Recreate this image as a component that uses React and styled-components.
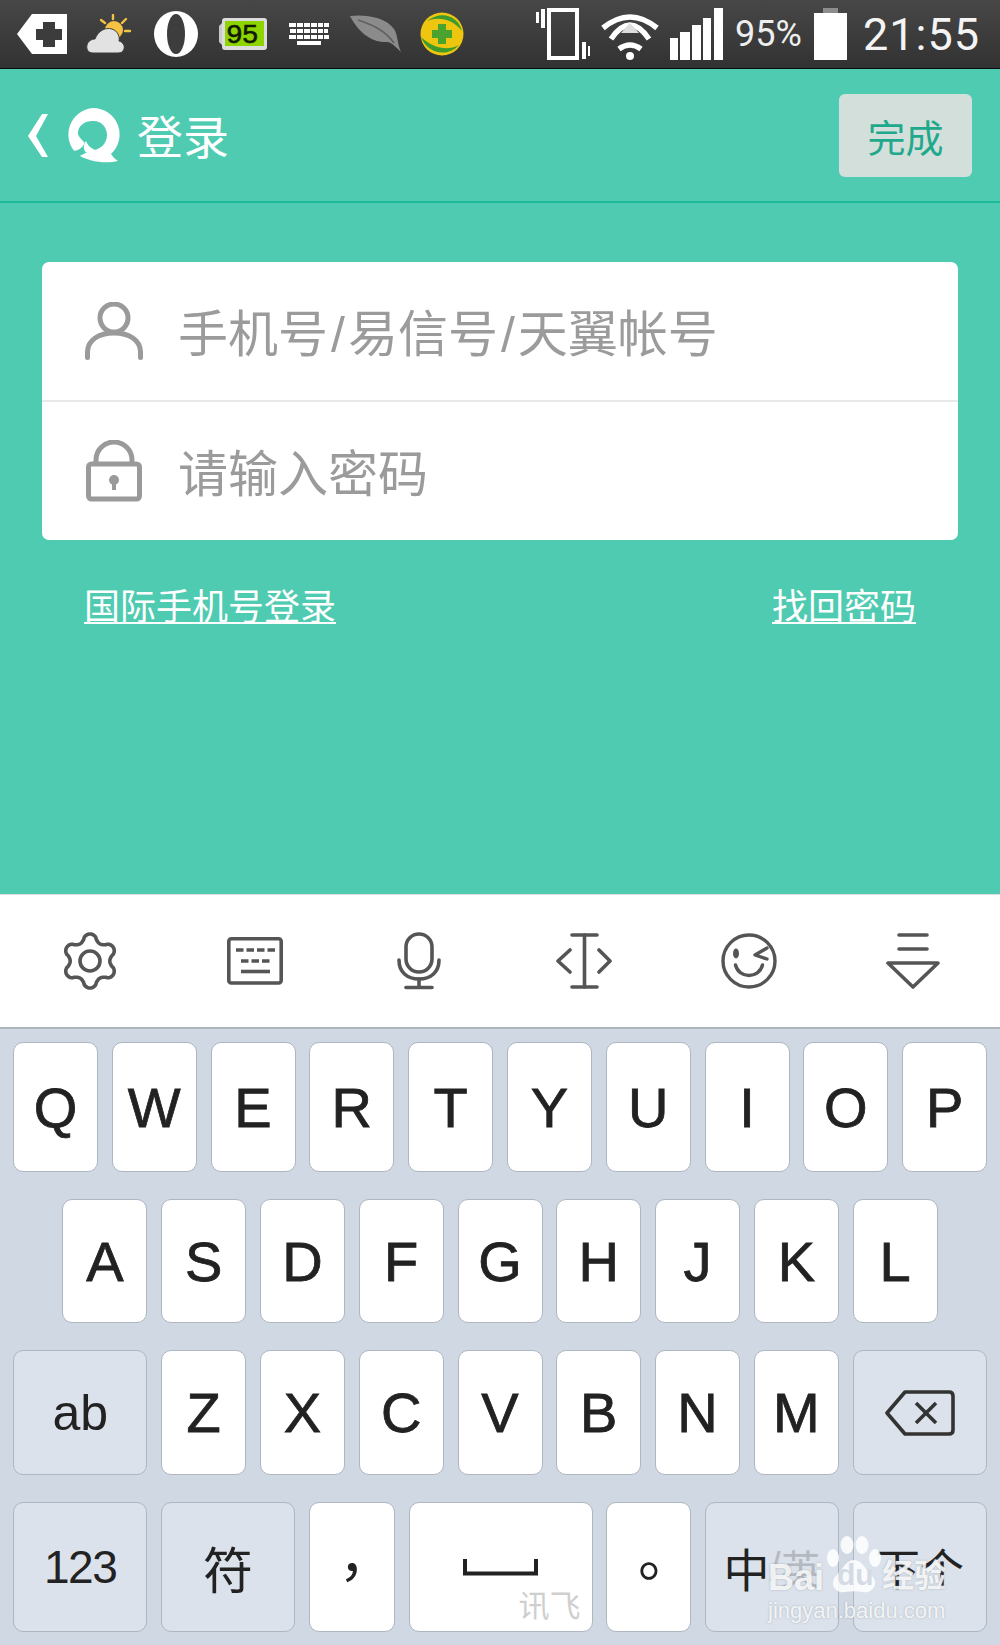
import React from 'react';
import styled, { createGlobalStyle } from 'styled-components';

const CJK = `"Liberation Sans", "Noto Sans CJK SC", sans-serif`;

const GlobalStyle = createGlobalStyle`
  html, body {
    margin: 0;
    padding: 0;
    background: #cfd8e3;
  }
`;

const Page = styled.div`
  position: relative;
  width: 1000px;
  height: 1645px;
  overflow: hidden;
  display: flex;
  flex-direction: column;
  font-family: ${CJK};
`;

const StatusBar = styled.div`
  height: 68px;
  flex: none;
  display: flex;
  align-items: center;
  padding-left: 9px;
  padding-right: 20px;
  background: linear-gradient(#474747, #323232);
  border-bottom: 1px solid #0c0c0c;
`;

const NoticeSlot = styled.div`
  width: 66.7px;
  display: flex;
  justify-content: center;
  align-items: center;
`;

const StatusRight = styled.div`
  margin-left: auto;
  display: flex;
  align-items: center;
  gap: 10px;
`;

const Percent = styled.span`
  font-family: Roboto, sans-serif;
  font-size: 36px;
  color: #eee;
  margin: 0 2px;
`;

const Clock = styled.span`
  font-family: Roboto, sans-serif;
  font-size: 45px;
  letter-spacing: 1px;
  color: #f4f4f4;
  margin-left: 6px;
`;

const Header = styled.header`
  height: 132px;
  flex: none;
  display: flex;
  align-items: center;
  padding: 0 28px 0 28px;
  background: #4fcbb1;
  border-bottom: 2px solid #1bbb9a;
`;

const Title = styled.h1`
  margin: 0 0 2px 17px;
  font-size: 46px;
  font-weight: 400;
  color: #fff;
`;

const DoneButton = styled.button`
  margin-left: auto;
  width: 133px;
  height: 83px;
  border: 0;
  border-radius: 6px;
  background: #d3dfdb;
  color: #1fa98c;
  font-family: ${CJK};
  font-size: 38px;
`;

const Main = styled.main`
  flex: 1;
  padding: 59px 42px 0;
  background: #4fcbb1;
`;

const Card = styled.div`
  background: #fff;
  border-radius: 7px;
  overflow: hidden;
`;

const Field = styled.div`
  height: 138px;
  display: flex;
  align-items: center;
  gap: 35px;
  padding-left: 43px;
  & + & {
    border-top: 2px solid #e8e8e8;
  }
`;

const FieldIcon = styled.div`
  width: 58px;
  display: flex;
  justify-content: center;
`;

const Placeholder = styled.span`
  font-size: 50px;
  color: #9b9b9b;
  margin-bottom: 2px;
`;

const Sep = styled.span`
  margin: 0 3px;
`;

const LinkRow = styled.div`
  display: flex;
  justify-content: space-between;
  padding: 38px 42px 0;
`;

const TextLink = styled.a`
  font-size: 36px;
  color: #fff;
  text-decoration: underline;
  text-decoration-thickness: 2px;
  text-underline-offset: 2px;
`;

const Keyboard = styled.section`
  flex: none;
  background: #cfd8e3;
`;

const Toolbar = styled.div`
  height: 132px;
  display: grid;
  grid-template-columns: repeat(6, 164.6px);
  align-items: center;
  justify-items: center;
  padding-left: 8px;
  background: #fff;
  border-top: 1px solid #dcdce2;
  border-bottom: 2px solid #aeb6bd;
`;

const Keys = styled.div`
  display: flex;
  flex-direction: column;
  gap: 27px;
  height: 616px;
  box-sizing: border-box;
  padding: 13px 13px 0;
`;

const KeyRow = styled.div`
  display: flex;
  justify-content: center;
  gap: 13.8px;
  height: ${(p) => p.$height}px;
`;

const Key = styled.div`
  position: relative;
  box-sizing: border-box;
  width: ${(p) => p.$width || 85}px;
  flex: none;
  display: flex;
  align-items: center;
  justify-content: center;
  border: 1px solid #aeb6c0;
  border-radius: 10px;
  background: ${(p) => (p.$fn ? '#dbe2eb' : '#fff')};
  color: #222;
  font-size: ${(p) => p.$size || 56}px;
  letter-spacing: ${(p) => p.$tight || 0}px;
`;

const Letter = styled.span`
  -webkit-text-stroke: 0.8px #222;
`;

const Punct = styled.span`
  font-family: "Noto Sans CJK TC", sans-serif;
  font-size: 56px;
`;

const Slash = styled.span`
  color: #b8bcc2;
  font-size: 40px;
`;

const Muted = styled.span`
  color: #b4b9c0;
  font-size: 40px;
`;

const Brand = styled.span`
  position: absolute;
  right: 11px;
  bottom: 9px;
  font-size: 31px;
  line-height: 1;
  color: #cfcfcf;
`;

const Watermark = styled.div`
  position: absolute;
  left: 766px;
  top: 1536px;
  width: 185px;
  height: 90px;
  color: rgba(255, 255, 255, 0.85);
  text-shadow: 0 0 2px rgba(120, 130, 140, 0.55);
  pointer-events: none;
`;

const MarkWord = styled.span`
  position: absolute;
  left: ${(p) => p.$left}px;
  top: 24px;
  font-size: ${(p) => p.$size || 36}px;
  font-weight: 700;
  line-height: 1;
`;

const MarkInset = styled(MarkWord)`
  color: #d3dbe5;
  text-shadow: none;
`;

const MarkUrl = styled.span`
  position: absolute;
  left: 2px;
  top: 64px;
  font-size: 22px;
  line-height: 1;
`;

// six round lobes, one of them pointing straight up
const gearPath = () => {
  const points = [];
  for (let i = 0; i < 180; i++) {
    const a = (i / 180) * Math.PI * 2;
    const c = Math.cos(6 * a);
    const r = 23.4 + 3.6 * Math.sign(c) * Math.pow(Math.abs(c), 0.7);
    points.push(`${(r * Math.sin(a)).toFixed(2)} ${(-r * Math.cos(a)).toFixed(2)}`);
  }
  return `M${points.join(' L')} Z`;
};

const BackTag = () => (
  <svg width="50" height="40" viewBox="0 0 50 40">
    <path d="M0 20 L15 0 H50 V40 H15 Z" fill="#fff" />
    <path d="M27 8 H39 V15 H46 V26 H39 V33 H27 V26 H20 V15 H27 Z" fill="#3c3c3c" transform="translate(-1 0)" />
  </svg>
);

const Weather = () => (
  <svg width="46" height="40" viewBox="0 0 46 40">
    <circle cx="28" cy="16" r="9" fill="#f6c244" />
    <g stroke="#f6c244" strokeWidth="2.4" strokeLinecap="round">
      <path d="M27 1 V5" />
      <path d="M15 6 L19 9" />
      <path d="M40 5 L36 9" />
      <path d="M39 17 H44" />
    </g>
    <path d="M7 39 C2 39 0 35 1 31 C2 27 6 25 9 25 C12 17 19 13 26 15 C32 17 34 23 33 27 C37 28 39 32 38 35 C37 38 35 39 32 39 Z" fill="#e2e2e2" stroke="#3d3d3d" strokeWidth="1" />
  </svg>
);

const OperaMark = () => (
  <svg width="46" height="48" viewBox="0 0 46 48">
    <ellipse cx="23" cy="24" rx="22" ry="23" fill="#fff" />
    <ellipse cx="23" cy="24" rx="9" ry="20" fill="#3d3d3d" />
  </svg>
);

const BatteryBadge = () => (
  <svg width="52" height="34" viewBox="0 0 52 34">
    <path d="M3 9 L7 5 V29 L3 25 Z" fill="#c9c9c9" />
    <rect x="6" y="1" width="45" height="32" rx="3" fill="#dcdcdc" />
    <rect x="9" y="4" width="39" height="25" fill="#8ed400" />
    <text x="10" y="26" fontFamily="Liberation Mono, monospace" fontSize="28" letterSpacing="-1" fill="#101a00" stroke="#101a00" strokeWidth="0.6">95</text>
  </svg>
);

const ImeGlyph = () => (
  <svg width="40" height="22" viewBox="0 0 40 22" fill="#fff">
    <rect x="0" y="0" width="40" height="4" />
    <rect x="1" y="6" width="38" height="4" />
    <rect x="0" y="12" width="40" height="4" />
    <rect x="8" y="18" width="24" height="4" />
    <g fill="#3d3d3d">
      <rect x="7" y="0" width="1" height="16" />
      <rect x="14" y="0" width="1" height="16" />
      <rect x="21" y="0" width="1" height="16" />
      <rect x="28" y="0" width="1" height="16" />
      <rect x="34" y="0" width="1" height="16" />
    </g>
  </svg>
);

const Leaf = () => (
  <svg width="52" height="38" viewBox="0 0 52 38">
    <path d="M0 1 C14 -1 36 2 44 14 C48 20 47 28 51 37 C46 32 42 28 38 27 C20 28 8 16 0 1 Z" fill="#8b8b8b" />
    <path d="M8 5 C20 9 34 14 44 28" stroke="#5f5f5f" strokeWidth="1.5" fill="none" />
  </svg>
);

const GuardBadge = () => (
  <svg width="44" height="44" viewBox="0 0 44 44">
    <circle cx="22" cy="22" r="21.5" fill="#eec50f" />
    <path d="M1 25 C6 40 26 47 39 33 C28 39 14 37 1 25 Z" fill="#3d9a2c" />
    <path d="M42 19 C39 5 22 -3 7 9 C20 4 33 8 42 19 Z" fill="#3d9a2c" />
    <path d="M18 12 H26 V18 H32 V26 H26 V32 H18 V26 H12 V18 H18 Z" fill="#4aa32e" />
  </svg>
);

const VibrateIcon = () => (
  <svg width="54" height="52" viewBox="0 0 54 52" fill="#fff">
    <rect x="13" y="2" width="28" height="48" fill="none" stroke="#fff" strokeWidth="4" />
    <rect x="0" y="4" width="3" height="11" />
    <rect x="5" y="1" width="4" height="19" />
    <rect x="46" y="34" width="4" height="17" />
    <rect x="52" y="38" width="2" height="10" />
  </svg>
);

const WifiIcon = () => (
  <svg width="60" height="56" viewBox="0 0 60 56" fill="none" stroke="#fff" strokeWidth="5.5">
    <path d="M3 22 Q30 0 57 22" />
    <path d="M11 33 Q30 5 49 33" />
    <path d="M19 43 Q30 35 41 43" />
    <circle cx="30" cy="50" r="4" fill="#fff" stroke="none" />
    <path d="M21 27 L30 17 L39 27 Z" fill="#ddd" stroke="none" />
  </svg>
);

const SignalIcon = () => (
  <svg width="53" height="52" viewBox="0 0 53 52" fill="#fff">
    <rect x="0" y="30" width="8" height="22" />
    <rect x="10" y="24" width="10" height="28" />
    <rect x="22" y="17" width="9" height="35" />
    <rect x="33" y="10" width="8" height="42" />
    <rect x="44" y="0" width="9" height="52" />
  </svg>
);

const BatteryIcon = () => (
  <svg width="33" height="52" viewBox="0 0 33 52">
    <rect x="9" y="0" width="15" height="6" fill="#8d8d8d" />
    <rect x="0" y="5" width="33" height="47" fill="#fff" />
  </svg>
);

const BackChevron = () => (
  <svg width="21" height="46" viewBox="0 0 21 46">
    <path d="M14 2 H20 L8 24 L20 45 H14 L0 24 Z" fill="#fff" />
  </svg>
);

const AppLogo = () => (
  <svg width="54" height="56" viewBox="0 0 54 56" style={{ marginLeft: 17 }}>
    <path d="M27 1 A26.5 26.5 0 0 1 45 47 C47 50 49 52 52 54 C40 57 22 55 11 47 A26.5 26.5 0 0 1 27 1 Z" fill="#fff" />
    <path d="M26 14 C35 13 41 20 41 28 C41 36 35 42 28 43 C22 42 20 39 19 36 C15 32 11 28 12 25 C13 18 19 14 26 14 Z" fill="#4fcbb1" />
    <path d="M19 35 C17 41 12 44 6 44 L10 50 C17 48 24 44 26 42 Z" fill="#4fcbb1" />
    <path d="M20 34 C22 39 25 41 29 43 L21 46 C17 44 17 38 20 34 Z" fill="#fff" />
  </svg>
);

const UserIcon = () => (
  <svg width="58" height="58" viewBox="0 0 58 58" fill="none" stroke="#9a9a9a" strokeWidth="5" strokeLinecap="round">
    <circle cx="29" cy="16" r="14" />
    <path d="M2.5 55.5 V50 C2.5 38 14 31 29 31 C44 31 55.5 38 55.5 50 V55.5" />
  </svg>
);

const LockIcon = () => (
  <svg width="56" height="62" viewBox="0 0 56 62" fill="none" stroke="#9a9a9a" strokeWidth="5">
    <rect x="2.5" y="24" width="51" height="35" rx="3" />
    <path d="M10 24 V20 A18 18 0 0 1 46 20 V24" />
    <circle cx="28" cy="40" r="5" fill="#9a9a9a" stroke="none" />
    <rect x="26" y="41" width="4" height="9" fill="#9a9a9a" stroke="none" />
  </svg>
);

const GearIcon = () => (
  <svg width="56" height="58" viewBox="-28 -29 56 58" fill="none" stroke="#555" strokeWidth="3.6" strokeLinejoin="round">
    <path d={gearPath()} />
    <circle r="10" />
  </svg>
);

const KeyboardIcon = () => (
  <svg width="56" height="48" viewBox="0 0 56 48" fill="none" stroke="#555" strokeWidth="3.6">
    <rect x="1.8" y="1.8" width="52.4" height="44.2" rx="2.5" />
    <path d="M9 13 H48" strokeDasharray="7.5 3" />
    <path d="M14 24 H43" strokeDasharray="7.5 3" />
    <path d="M14 34.5 H43" />
  </svg>
);

const MicIcon = () => (
  <svg width="44" height="58" viewBox="0 0 44 58" fill="none" stroke="#555" strokeWidth="3.6" strokeLinecap="round">
    <rect x="9" y="2" width="26" height="38" rx="13" />
    <path d="M2 28 C2 40 10 47 22 47 C34 47 42 40 42 28" />
    <path d="M22 47 V55" />
    <path d="M9 55.5 H35" />
  </svg>
);

const CursorIcon = () => (
  <svg width="56" height="56" viewBox="0 0 56 56" fill="none" stroke="#555" strokeWidth="3.6" strokeLinecap="round" strokeLinejoin="round">
    <path d="M16 2 H41" />
    <path d="M16 54 H41" />
    <path d="M28.5 2 V54" />
    <path d="M14 17 L2 28 L14 39" />
    <path d="M43 17 L54 28 L43 39" />
  </svg>
);

const WinkIcon = () => (
  <svg width="56" height="56" viewBox="0 0 56 56" fill="none" stroke="#555" strokeWidth="3.4" strokeLinecap="round" strokeLinejoin="round">
    <circle cx="28" cy="28" r="26" />
    <ellipse cx="15" cy="20.5" rx="3" ry="5" fill="#555" stroke="none" />
    <path d="M46 15 L34 22 L46 26" />
    <path d="M14.5 32 C18 46 38 46 41.5 32" />
  </svg>
);

const HideIcon = () => (
  <svg width="54" height="56" viewBox="0 0 54 56" fill="none" stroke="#555" strokeWidth="3.6" strokeLinecap="round" strokeLinejoin="round">
    <path d="M13 2 H41" />
    <path d="M13 16 H41" />
    <path d="M2 30 H52 L27 54 Z" />
  </svg>
);

const DeleteIcon = () => (
  <svg width="70" height="46" viewBox="0 0 70 46" fill="none" stroke="#333" strokeWidth="3.6" strokeLinejoin="round">
    <path d="M20 2 H64 Q68 2 68 6 V40 Q68 44 64 44 H20 L2 23 Z" />
    <path d="M31 13 L51 33" />
    <path d="M51 13 L31 33" />
  </svg>
);

const SpaceGlyph = () => (
  <svg width="75" height="17" viewBox="0 0 75 17" fill="none" stroke="#222" strokeWidth="4">
    <path d="M2 0 V14.5 H73 V0" />
  </svg>
);

const Paw = () => (
  <svg width="54" height="58" viewBox="0 0 54 58" fill="currentColor" style={{ position: 'absolute', left: 61, top: 0 }}>
    <ellipse cx="6" cy="22" rx="6" ry="9" />
    <ellipse cx="20" cy="9" rx="6.5" ry="9" />
    <ellipse cx="35" cy="9" rx="6.5" ry="9" />
    <ellipse cx="48" cy="22" rx="6" ry="9" />
    <path d="M27 24 C36 24 38 34 45 40 C52 47 46 58 36 56 C30 55 24 55 18 56 C8 58 2 47 9 40 C16 34 18 24 27 24 Z" />
  </svg>
);

const topRow = ['Q', 'W', 'E', 'R', 'T', 'Y', 'U', 'I', 'O', 'P'];
const homeRow = ['A', 'S', 'D', 'F', 'G', 'H', 'J', 'K', 'L'];
const bottomRow = ['Z', 'X', 'C', 'V', 'B', 'N', 'M'];

const LetterKey = ({ children }) => (
  <Key>
    <Letter>{children}</Letter>
  </Key>
);

const App = () => (
  <Page>
    <GlobalStyle />
    <StatusBar>
      <NoticeSlot><BackTag /></NoticeSlot>
      <NoticeSlot><Weather /></NoticeSlot>
      <NoticeSlot><OperaMark /></NoticeSlot>
      <NoticeSlot><BatteryBadge /></NoticeSlot>
      <NoticeSlot><ImeGlyph /></NoticeSlot>
      <NoticeSlot><Leaf /></NoticeSlot>
      <NoticeSlot><GuardBadge /></NoticeSlot>
      <StatusRight>
        <VibrateIcon />
        <WifiIcon />
        <SignalIcon />
        <Percent>95%</Percent>
        <BatteryIcon />
        <Clock>21:55</Clock>
      </StatusRight>
    </StatusBar>
    <Header>
      <BackChevron />
      <AppLogo />
      <Title>登录</Title>
      <DoneButton>完成</DoneButton>
    </Header>
    <Main>
      <Card>
        <Field>
          <FieldIcon><UserIcon /></FieldIcon>
          <Placeholder>手机号<Sep>/</Sep>易信号<Sep>/</Sep>天翼帐号</Placeholder>
        </Field>
        <Field>
          <FieldIcon><LockIcon /></FieldIcon>
          <Placeholder>请输入密码</Placeholder>
        </Field>
      </Card>
      <LinkRow>
        <TextLink>国际手机号登录</TextLink>
        <TextLink>找回密码</TextLink>
      </LinkRow>
    </Main>
    <Keyboard>
      <Toolbar>
        <GearIcon />
        <KeyboardIcon />
        <MicIcon />
        <CursorIcon />
        <WinkIcon />
        <HideIcon />
      </Toolbar>
      <Keys>
        <KeyRow $height={130}>
          {topRow.map((k) => <LetterKey key={k}>{k}</LetterKey>)}
        </KeyRow>
        <KeyRow $height={124}>
          {homeRow.map((k) => <LetterKey key={k}>{k}</LetterKey>)}
        </KeyRow>
        <KeyRow $height={125}>
          <Key $width={134} $fn $size={50}>ab</Key>
          {bottomRow.map((k) => <LetterKey key={k}>{k}</LetterKey>)}
          <Key $width={134} $fn><DeleteIcon /></Key>
        </KeyRow>
        <KeyRow $height={130}>
          <Key $width={134} $fn $size={46} $tight={-1.5}>123</Key>
          <Key $width={134} $fn $size={50}>符</Key>
          <Key $width={86}><Punct>，</Punct></Key>
          <Key $width={184}>
            <SpaceGlyph />
            <Brand>讯飞</Brand>
          </Key>
          <Key><Punct>。</Punct></Key>
          <Key $width={134} $fn $size={46}>中<Slash>/</Slash><Muted>英</Muted></Key>
          <Key $width={134} $fn $size={44}>下个</Key>
        </KeyRow>
      </Keys>
    </Keyboard>
    <Watermark>
      <Paw />
      <MarkWord $left={2}>Bai</MarkWord>
      <MarkInset $left={71} $size={30}>du</MarkInset>
      <MarkWord $left={116} $size={32}>经验</MarkWord>
      <MarkUrl>jingyan.baidu.com</MarkUrl>
    </Watermark>
  </Page>
);

export default App;
